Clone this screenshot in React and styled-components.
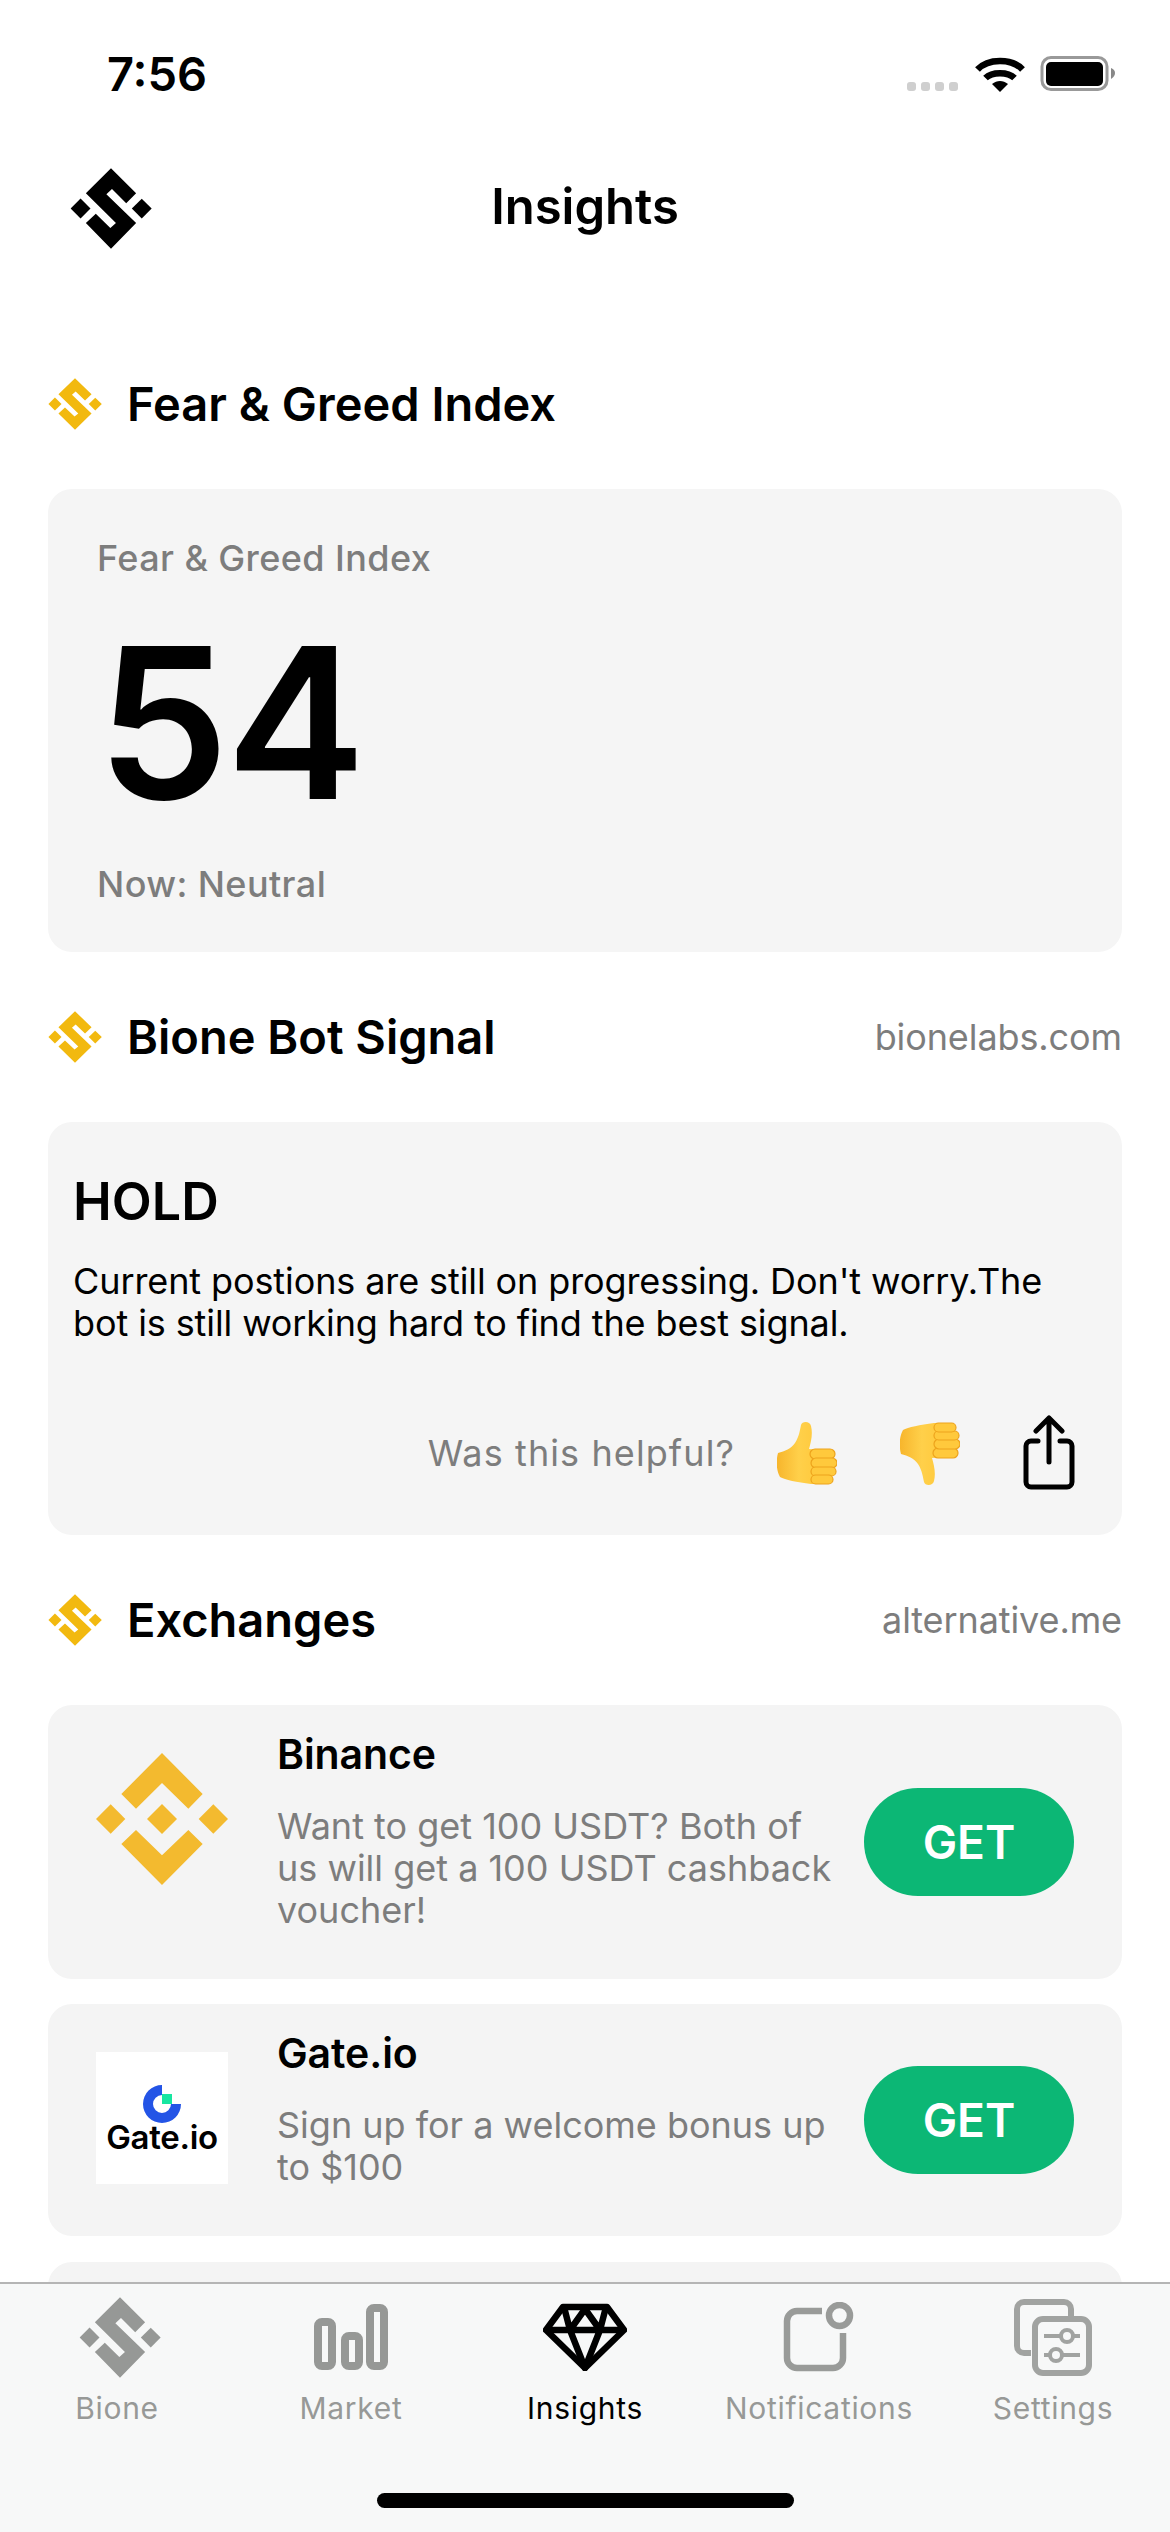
import React from "react";
import styled, { createGlobalStyle } from "styled-components";

const Global = createGlobalStyle`
  html, body { margin: 0; padding: 0; background: #fff; }
  * { box-sizing: border-box; }
`;

const Screen = styled.div`
  position: relative;
  width: 1170px;
  height: 2532px;
  overflow: hidden;
  background: #fff;
  color: #000;
  font-family: Inter, "Liberation Sans", sans-serif;
`;

const StatusBar = styled.div`
  height: 130px;
  padding: 50px 55px 0 107px;
  display: flex;
  justify-content: space-between;
  align-items: flex-start;
`;
const Time = styled.div`
  font-size: 47px;
  line-height: 48px;
  font-weight: 600;
`;
const StatusIcons = styled.svg`
  display: block;
  margin-top: 5px;
`;

const Nav = styled.header`
  height: 156px;
  margin-bottom: 33px;
  padding: 0 70px;
  display: grid;
  grid-template-columns: 1fr auto 1fr;
  align-items: center;
`;
const NavTitle = styled.h1`
  margin: -2px 0 0;
  font-size: 49px;
  font-weight: 600;
  line-height: 60px;
  letter-spacing: 0;
`;

const Main = styled.main`
  padding: 0 48px;
`;
const SectionHead = styled.div`
  height: 170px;
  display: flex;
  align-items: center;
  justify-content: space-between;
`;
const HeadLeft = styled.div`
  display: flex;
  align-items: center;
  gap: 25px;
`;
const SectionTitle = styled.h2`
  margin: 0;
  font-size: 47px;
  font-weight: 600;
  line-height: 56px;
`;
const Source = styled.span`
  font-size: 36px;
  color: #7d7d7d;
  letter-spacing: -0.1px;
`;
const Card = styled.section`
  background: #f5f5f5;
  border-radius: 24px;
`;
const IndexCard = styled(Card)`
  height: 463px;
  padding: 47px 49px 0;
`;
const Muted = styled.div`
  font-size: 36px;
  line-height: 44px;
  font-weight: 500;
  color: #7d7d7d;
  letter-spacing: 0.4px;
`;
const BigNumber = styled.div`
  font-size: 210px;
  line-height: 260px;
  font-weight: 600;
  letter-spacing: -3px;
  margin: 13px 0 9px 0;
`;
const SignalCard = styled(Card)`
  padding: 50px 47px 44px 25px;
`;
const SignalTitle = styled.div`
  font-size: 52px;
  line-height: 60px;
  font-weight: 600;
`;
const SignalText = styled.p`
  margin: 28px 0 0;
  font-size: 36px;
  line-height: 42px;
  letter-spacing: -0.1px;
`;
const Feedback = styled.div`
  margin-top: 71px;
  display: flex;
  justify-content: flex-end;
  align-items: center;
  height: 76px;
`;
const FeedbackLabel = styled.span`
  font-size: 36px;
  letter-spacing: 1.1px;
  color: #7d7d7d;
  margin-right: 42px;
`;
const Thumb = styled.svg`
  display: block;
  margin-right: ${(p) => p.$gap}px;
  transform: ${(p) => (p.$down ? "scaleY(-1)" : "none")};
`;
const ExchangeList = styled.div`
  display: flex;
  flex-direction: column;
  gap: 25px;
`;
const ExchangeCard = styled(Card)`
  background: #f4f4f4;
  display: flex;
  align-items: flex-start;
  padding: 24px 48px 48px;
`;
const LogoSlot = styled.div`
  flex: none;
  width: 132px;
  height: 132px;
  margin-top: 24px;
  background: ${(p) => p.$bg || "transparent"};
  display: flex;
  flex-direction: column;
  align-items: center;
  justify-content: center;
`;
const GateWord = styled.span`
  font-size: 33px;
  line-height: 28px;
  font-weight: 600;
  letter-spacing: -0.3px;
`;
const ExchangeBody = styled.div`
  width: 560px;
  margin-left: 49px;
`;
const ExchangeName = styled.div`
  font-size: 41px;
  line-height: 50px;
  font-weight: 600;
  letter-spacing: -0.1px;
`;
const ExchangeDesc = styled.div`
  margin-top: 26px;
  font-size: 36px;
  line-height: 42px;
  color: #7d7d7d;
`;
const GetButton = styled.button`
  flex: none;
  align-self: center;
  margin: 24px 0 0 auto;
  width: 210px;
  height: 108px;
  border: 0;
  border-radius: 54px;
  background: #0cb775;
  color: #fff;
  font-family: inherit;
  font-size: 46px;
  font-weight: 600;
`;
const Placeholder = styled(Card)`
  height: 200px;
  margin-top: 26px;
  background: #f4f4f4;
`;

const TabBar = styled.nav`
  position: absolute;
  left: 0;
  right: 0;
  bottom: 0;
  height: 250px;
  background: #f7f8f8;
  border-top: 2px solid #b5b5b5;
  display: grid;
  grid-template-columns: repeat(5, 1fr);
  align-content: start;
`;
const Tab = styled.div`
  display: flex;
  flex-direction: column;
  align-items: center;
  color: ${(p) => (p.$active ? "#000" : "#979997")};
`;
const TabIcon = styled.div`
  height: 106px;
  padding-left: ${(p) => p.$shift || 0}px;
  display: flex;
  align-items: center;
  justify-content: center;
`;
const TabLabel = styled.span`
  font-size: 30px;
  line-height: 36px;
  letter-spacing: 0.7px;
`;
const HomeBar = styled.div`
  position: absolute;
  left: 377px;
  bottom: 24px;
  width: 417px;
  height: 15px;
  border-radius: 8px;
  background: #000;
`;

const SLogo = ({ w, h, fill }) => (
  <svg width={w} height={h} viewBox="-124 -122 248 244" preserveAspectRatio="none" fill={fill}>
    <path d="M0-121L76-46L46-16L3-59L-14-43L76 44L0 121L-76 44L-46 16L-2 59L15 44L-76-46Z" />
    <path d="M-122 0L-92-30L-62 0L-92 30Z" />
    <path d="M63 0L93-29L123 0L93 30Z" />
  </svg>
);

const HandPaths = () => (
  <>
    <defs>
      <linearGradient id="hand" x1="0" y1="0" x2="1" y2="0">
        <stop offset="0" stopColor="#f7b52c" />
        <stop offset="0.5" stopColor="#ffd04a" />
        <stop offset="1" stopColor="#ffc83a" />
      </linearGradient>
    </defs>
    <path
      d="M1 31C8 29 14 27 18 21C22 15 23 8 24 3C25-1 33-1 34 4C36 12 34 20 32 27L44 28V62H34C20 60 8 58 3 55C-1 48-1 38 1 31Z"
      fill="url(#hand)"
    />
    <rect x="33" y="27" width="25" height="10" rx="5" fill="#ffc93c" stroke="#eda31c" strokeWidth="1.2" />
    <rect x="34" y="36" width="26" height="10" rx="5" fill="#ffc93c" stroke="#eda31c" strokeWidth="1.2" />
    <rect x="34" y="45" width="25" height="9" rx="4.5" fill="#ffc93c" stroke="#eda31c" strokeWidth="1.2" />
    <rect x="34" y="53" width="22" height="9" rx="4.5" fill="#ffc93c" stroke="#eda31c" strokeWidth="1.2" />
  </>
);

const tabs = [
  {
    label: "Bione",
    shift: 6,
    icon: <SLogo w={82} h={81} fill="#969896" />,
  },
  {
    label: "Market",
    icon: (
      <svg width="74" height="66" viewBox="0 0 74 66" fill="none" stroke="#969896" strokeWidth="8">
        <rect x="4" y="18" width="14" height="44" rx="4" />
        <rect x="31" y="32" width="14" height="30" rx="4" />
        <rect x="56" y="4" width="14" height="58" rx="4" />
      </svg>
    ),
  },
  {
    label: "Insights",
    active: true,
    icon: (
      <svg width="84" height="68" viewBox="0 0 84 68" fill="none" stroke="#000" strokeWidth="6.5" strokeLinejoin="round">
        <path d="M20 4H64L81 27L42 65L3 27Z" />
        <path d="M3 27H81M21 4L27 27L42 6L57 27L63 4M27 27L42 65L57 27" />
      </svg>
    ),
  },
  {
    label: "Notifications",
    icon: (
      <svg width="72" height="70" viewBox="0 0 72 70" fill="none" stroke="#999b99" strokeWidth="6.5">
        <path d="M39 9H14A10 10 0 0 0 4 19V56A10 10 0 0 0 14 66H50A10 10 0 0 0 60 56V31" />
        <circle cx="56.500" cy="13.500" r="10.500" />
      </svg>
    ),
  },
  {
    label: "Settings",
    icon: (
      <svg width="78" height="77" viewBox="0 0 78 77" fill="none" stroke="#a1a3a1" strokeWidth="6">
        <path d="M17 54H10A7 7 0 0 1 3 47V10A7 7 0 0 1 10 3H50A7 7 0 0 1 57 10V17" />
        <rect x="21" y="20" width="54" height="54" rx="8" />
        <path d="M30 37H47M59 37H66M30 56H36M48 56H66" strokeWidth="4" />
        <circle cx="53" cy="37" r="6" strokeWidth="4" />
        <circle cx="42" cy="56" r="6" strokeWidth="4" />
      </svg>
    ),
  },
];

const Head = ({ title, source }) => (
  <SectionHead>
    <HeadLeft>
      <SLogo w={54} h={52} fill="#f2b90f" />
      <SectionTitle>{title}</SectionTitle>
    </HeadLeft>
    {source && <Source>{source}</Source>}
  </SectionHead>
);

export default function App() {
  return (
    <Screen>
      <Global />
      <StatusBar>
        <Time>7:56</Time>
        <StatusIcons width="208" height="38" viewBox="0 0 208 38">
          <g fill="#cfcfcf">
            <rect x="0" y="27" width="9" height="9" rx="3" />
            <rect x="14" y="27" width="9" height="9" rx="3" />
            <rect x="28" y="27" width="9" height="9" rx="3" />
            <rect x="42" y="27" width="9" height="9" rx="3" />
          </g>
          <g fill="none" stroke="#000" strokeWidth="6.500">
            <path d="M70.500 14.500C81 3 105 3 115.500 14.500" />
            <path d="M78.500 23C85 16.500 101 16.500 107.500 23" />
          </g>
          <path d="M85 29C90 25 96 25 101 29L93 37Z" fill="#000" />
          <rect x="135" y="2.500" width="65" height="32" rx="9" fill="none" stroke="#999" strokeWidth="3" />
          <rect x="139" y="7" width="57" height="24" rx="5" fill="#000" />
          <path d="M204 13C207 14 208 16 208 18C208 20 207 22 204 24Z" fill="#888" />
        </StatusIcons>
      </StatusBar>
      <Nav>
        <SLogo w={82} h={81} fill="#000" />
        <NavTitle>Insights</NavTitle>
      </Nav>
      <Main>
        <Head title="Fear & Greed Index" />
        <IndexCard>
          <Muted>Fear &amp; Greed Index</Muted>
          <BigNumber>54</BigNumber>
          <Muted>Now: Neutral</Muted>
        </IndexCard>
        <Head title="Bione Bot Signal" source="bionelabs.com" />
        <SignalCard>
          <SignalTitle>HOLD</SignalTitle>
          <SignalText>
            Current postions are still on progressing. Don't worry.The bot is still working hard to find the best signal.
          </SignalText>
          <Feedback>
            <FeedbackLabel>Was this helpful?</FeedbackLabel>
            <Thumb width="60" height="63" viewBox="0 0 60 63" $gap={63}>
              <HandPaths />
            </Thumb>
            <Thumb width="60" height="63" viewBox="0 0 60 63" $gap={63} $down>
              <HandPaths />
            </Thumb>
            <svg width="52" height="76" viewBox="0 0 52 76" fill="none" stroke="#000" strokeWidth="5" strokeLinecap="round" strokeLinejoin="round">
              <path d="M26 3V47M13 16L26 3L39 16" />
              <path d="M15 26H8A5 5 0 0 0 3 31V67A5 5 0 0 0 8 72H44A5 5 0 0 0 49 67V31A5 5 0 0 0 44 26H37" />
            </svg>
          </Feedback>
        </SignalCard>
        <Head title="Exchanges" source="alternative.me" />
        <ExchangeList>
          <ExchangeCard>
            <LogoSlot>
              <svg width="132" height="132" viewBox="138 155 396 396" fill="#f3ba2f">
                <path d="M336 155L458 278L415 322L336 245L258 322L214 278Z" />
                <path d="M336 551L458 428L415 386L336 462L258 386L214 428Z" />
                <path d="M336 308L381 353L336 398L291 353Z" />
                <path d="M182 309L226 353L182 397L138 353Z" />
                <path d="M490 309L534 353L490 397L446 353Z" />
              </svg>
            </LogoSlot>
            <ExchangeBody>
              <ExchangeName>Binance</ExchangeName>
              <ExchangeDesc>Want to get 100 USDT? Both of us will get a 100 USDT cashback voucher!</ExchangeDesc>
            </ExchangeBody>
            <GetButton>GET</GetButton>
          </ExchangeCard>
          <ExchangeCard>
            <LogoSlot $bg="#fff">
              <svg width="38" height="38" viewBox="0 0 38 38">
                <path d="M19 0A19 19 0 1 0 38 19H28A9 9 0 1 1 19 10Z" fill="#2354e6" />
                <rect x="19" y="9" width="10" height="10" fill="#17e6a1" />
              </svg>
              <GateWord>Gate.io</GateWord>
            </LogoSlot>
            <ExchangeBody>
              <ExchangeName>Gate.io</ExchangeName>
              <ExchangeDesc>Sign up for a welcome bonus up to $100</ExchangeDesc>
            </ExchangeBody>
            <GetButton>GET</GetButton>
          </ExchangeCard>
        </ExchangeList>
        <Placeholder />
      </Main>
      <TabBar>
        {tabs.map((t) => (
          <Tab key={t.label} $active={t.active}>
            <TabIcon $shift={t.shift}>{t.icon}</TabIcon>
            <TabLabel>{t.label}</TabLabel>
          </Tab>
        ))}
        <HomeBar />
      </TabBar>
    </Screen>
  );
}
